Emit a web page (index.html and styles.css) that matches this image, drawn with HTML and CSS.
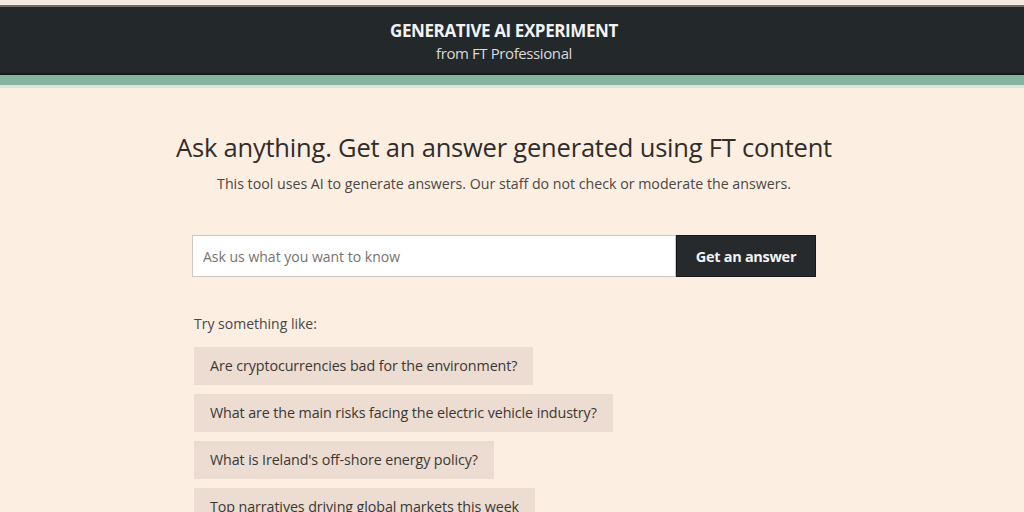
FILE: index.html
```html
<!DOCTYPE html>
<html lang="en">
<head>
<meta charset="utf-8">
<title>Generative AI Experiment</title>
<link rel="stylesheet" href="styles.css">
</head>
<body>
<header class="site-header">
  <div class="header-bar">
    <div class="header-title">GENERATIVE AI EXPERIMENT</div>
    <div class="header-sub">from FT Professional</div>
  </div>
  <div class="header-stripe"></div>
</header>
<main class="page">
  <section class="intro">
    <h1 class="headline">Ask anything. Get an answer generated using FT content</h1>
    <p class="disclaimer">This tool uses AI to generate answers. Our staff do not check or moderate the answers.</p>
  </section>
  <form class="ask-form">
    <input class="ask-input" type="text" placeholder="Ask us what you want to know">
    <button class="ask-button" type="button">Get an answer</button>
  </form>
  <section class="suggestions">
    <p class="suggest-label">Try something like:</p>
    <ul class="chip-list">
      <li class="chip">Are cryptocurrencies bad for the environment?</li>
      <li class="chip">What are the main risks facing the electric vehicle industry?</li>
      <li class="chip">What is Ireland's off-shore energy policy?</li>
      <li class="chip">Top narratives driving global markets this week</li>
    </ul>
  </section>
</main>
</body>
</html>
```
FILE: styles.css
```css
html, body {
  margin: 0;
  padding: 0;
}
body {
  background: #fdeee2;
  font-family: "Open Sans", "Liberation Sans", sans-serif;
  color: #33302e;
  height: 512px;
  overflow: hidden;
}
.site-header {
  padding-top: 5px;
  background: #f4e9e0;
}
.header-bar {
  background: #23282a;
  border-top: 2px solid #6e6a66;
  border-bottom: 2px solid #15191b;
  height: 70px;
  box-sizing: border-box;
  display: flex;
  flex-direction: column;
  align-items: center;
  justify-content: center;
  padding-right: 16px;
  padding-top: 3px;
  gap: 4px;
}
.header-title {
  color: #f2f2f2;
  font-weight: 700;
  font-size: 17px;
  line-height: 18px;
  letter-spacing: -0.4px;
}
.header-sub {
  color: #dadada;
  font-size: 15px;
  line-height: 18px;
  letter-spacing: -0.4px;
}
.header-stripe {
  height: 10px;
  background: #86b49e;
  border-bottom: 3px solid #d9e6dc;
}
.page {
  width: 624px;
  margin: 0 auto;
  padding-right: 16px;
}
.intro {
  text-align: center;
  padding-top: 42px;
}
.headline {
  margin: 0 -80px;
  font-weight: 400;
  font-size: 25.5px;
  line-height: 34px;
  color: #2f2d2b;
  white-space: nowrap;
  letter-spacing: -0.2px;
}
.disclaimer {
  margin: 11px -60px 0;
  font-size: 14.2px;
  line-height: 18px;
  color: #4a4744;
  white-space: nowrap;
  letter-spacing: 0;
}
.ask-form {
  display: flex;
  margin-top: 42px;
  height: 42px;
}
.ask-input {
  flex: 1;
  box-sizing: border-box;
  border: 1px solid #cfc7c0;
  background: #ffffff;
  padding: 0 10px;
  font-family: "Open Sans", sans-serif;
  font-size: 14px;
  color: #33302e;
  outline: none;
}
.ask-input::placeholder {
  color: #77726d;
}
.ask-button {
  width: 140px;
  background: #262a2c;
  color: #f2f2f2;
  border: 1px solid #15191b;
  font-family: "Open Sans", sans-serif;
  font-weight: 700;
  font-size: 14.5px;
  letter-spacing: -0.3px;
}
.suggestions {
  padding-left: 2px;
  margin-top: 38px;
}
.suggest-label {
  margin: 0 0 14px;
  font-size: 14px;
  line-height: 18px;
  color: #4a4744;
}
.chip-list {
  list-style: none;
  margin: 0;
  padding: 0;
  display: flex;
  flex-direction: column;
  align-items: flex-start;
  gap: 9px;
}
.chip {
  background: #ecdcd1;
  padding: 0 16px;
  height: 38px;
  line-height: 38px;
  font-size: 14.3px;
  color: #3b3835;
  letter-spacing: -0.1px;
}
```
